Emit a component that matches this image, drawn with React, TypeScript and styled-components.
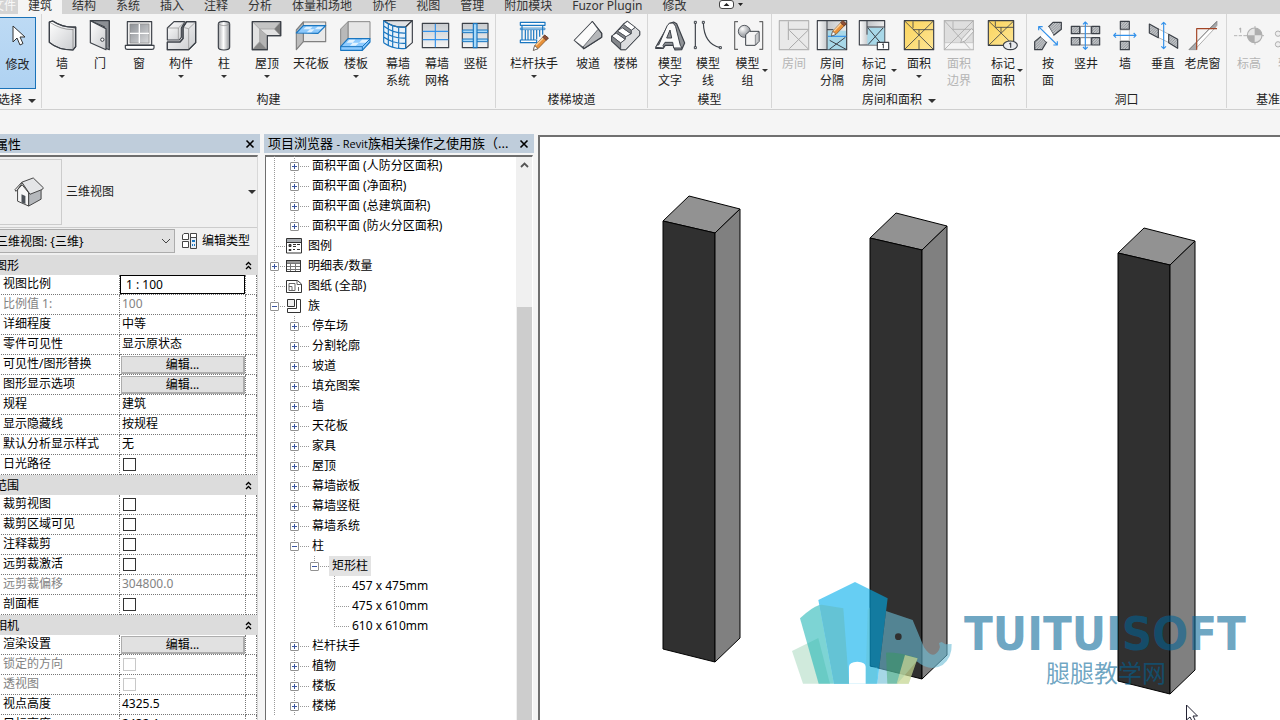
import React from 'react';
import styled, { createGlobalStyle, css } from 'styled-components';

const Global = createGlobalStyle`
  * { box-sizing: border-box; }
  body {
    margin: 0;
    background: #f5f5f5;
    color: #000;
    font-family: "Noto Sans", "Noto Sans CJK SC", sans-serif;
    font-size: 12px;
    line-height: 17px;
    overflow: hidden;
  }
  button, input, select { font: inherit; color: inherit; margin: 0; }
`;

const Shell = styled.div`
  display: flex;
  flex-direction: column;
  height: 100vh;
  margin-left: -8px;
  overflow: hidden;
`;

/* ---------- ribbon ---------- */

const TabBar = styled.nav`
  display: flex;
  flex: none;
  height: 14px;
  background: #d4d4d4;
  overflow: hidden;
`;

const Tab = styled.button<{ $active?: boolean; $file?: boolean }>`
  flex: none;
  height: 26px;
  margin-top: -8px;
  padding: ${p => (p.$file ? '0 2px 0 0' : '0 10px')};
  border: 0;
  background: ${p => (p.$active ? '#f5f5f5' : 'transparent')};
  color: ${p => (p.$file ? '#f8f8f8' : '#333')};
  white-space: nowrap;
`;

const TabTools = styled.button`
  display: flex;
  align-items: center;
  height: 10px;
  margin-left: 22px;
  padding: 0;
  border: 0;
  background: none;
`;

const Ribbon = styled.div`
  display: flex;
  flex: none;
  height: 96px;
  padding-left: 8px;
  border-bottom: 1px solid #cfcfcf;
  background: #f5f5f5;
  overflow: hidden;
`;

const PanelBox = styled.section`
  display: flex;
  flex: none;
  flex-direction: column;
  height: 94px;
  border-right: 1px solid #d6d6d6;
`;

const PanelButtons = styled.div`
  display: flex;
  flex: 1;
`;

const PanelTitle = styled.div`
  display: flex;
  align-items: center;
  justify-content: center;
  gap: 6px;
  height: 17px;
  margin-top: auto;
  color: #222;
  white-space: nowrap;
`;

const ToolButton = styled.button<{ $w: number; $off?: boolean }>`
  position: relative;
  display: flex;
  flex: none;
  flex-direction: column;
  align-items: center;
  width: ${p => p.$w}px;
  padding: 5px 0 0;
  border: 0;
  background: none;
  color: ${p => (p.$off ? '#b4b4b4' : '#222')};
  white-space: nowrap;
  svg { display: block; flex: none; }
`;

const ToolLabel = styled.span`
  margin-top: 4px;
  text-align: center;
  white-space: pre-line;
`;

const Caret = styled.i<{ $size?: number; $side?: boolean }>`
  display: block;
  border: ${p => p.$size ?? 3}px solid transparent;
  border-top-color: #333;
  border-bottom: 0;
  ${p => p.$side
    ? css`position: absolute; right: 3px; bottom: 19px;`
    : css`margin-top: 3px;`}
`;

const ModifyButton = styled(ToolButton)`
  height: 72px;
  margin: 3px 5px 0 -1px;
  padding-top: 2px;
  border: 1px solid #1a72b8;
  background: linear-gradient(#bddaf4, #afd2f2);
`;

const SelectTitle = styled(PanelTitle)`
  justify-content: flex-end;
  margin-left: -2px;
  padding-right: 5px;
`;

const D = '#3c4148';
const B = '#1976c0';
const S = '#3391ea';

function Icon({ x, children }: { x: number; children: React.ReactNode }) {
  return (
    <svg width="32" height="32" viewBox={`${x} 57 96 96`} fill="none" stroke={D} strokeWidth="3.5" strokeLinejoin="round" aria-hidden="true">
      {children}
    </svg>
  );
}

const Pencil = ({ x, y }: { x: number; y: number }) => (
  <g transform={`translate(${x} ${y})`} strokeWidth="2">
    <path d="M0 48L4 34L34 2L45 11L14 43Z" fill="#e8913a" stroke="#6b4524" />
    <path d="M8 33L36 4" stroke="#fbd09a" strokeWidth="4" />
    <path d="M34 2L45 11L39 18L28 9Z" fill="#8f4f38" stroke="#553326" />
    <path d="M0 48L4 34L14 43Z" fill="#fff" stroke="#555" />
  </g>
);

const Hatch = ({ d }: { d: string }) => (
  <>
    <path d={d} fill="#c3c6c9" stroke="none" />
    <path d={d} fill="url(#hatch)" stroke={D} strokeWidth="3.5" />
  </>
);

const icons: Record<string, React.ReactNode> = {
  wall: <Icon x={138}><path d="M148 66L158 63Q190 84 227 81V140L219 150Q175 150 148 127Z" fill="url(#metal)" /><path d="M148 66Q182 89 219 89V150M219 89L227 81" stroke="#777" strokeWidth="2" /><path d="M148 66L158 63Q190 84 227 81V140L219 150Q175 150 148 127Z" /></Icon>,
  door: <Icon x={252}><path d="M271 62H328V149L313 143V80Z" fill="#8b8f94" /><path d="M271 62L318 86V149L271 128Z" fill="url(#metal)" /><path d="M328 62V140" /><circle cx="307" cy="119" r="5" fill="#fff" strokeWidth="3" /></Icon>,
  window: <Icon x={369}><path d="M382 65H455V135H382Z" fill="#eee" /><path d="M390 72H447V129H390Z" fill="url(#gray)" stroke="#888" strokeWidth="2" /><path d="M418 72V129M390 100H447" stroke="#fff" strokeWidth="4" /><path d="M376 136H462V144Q462 148 456 148H382Q376 148 376 144Z" fill="#fff" /></Icon>,
  component: <Icon x={495}><path d="M502 84L522 65H555L544 84V112L538 120H502Z" fill="url(#metal)" /><path d="M502 84H535V120M535 84L555 65" stroke="#888" strokeWidth="2" /><path d="M560 65H587V128L566 149H502V126H540L549 116V82Z" fill="url(#metal)" /><path d="M549 82L566 86L587 66M566 86V149" stroke="#888" strokeWidth="2" /><path d="M560 65H587V128L566 149H502V126H540L549 116V82Z" /></Icon>,
  column: <Icon x={624}><path d="M655 72Q655 64 672 64Q689 64 689 72V142Q689 150 672 150Q655 150 655 142Z" fill="url(#tube)" /><path d="M655 72Q672 82 689 72" stroke="#888" strokeWidth="2" /></Icon>,
  roof: <Icon x={753}><path d="M757 65H842V107H802V149H757Z" fill="#e2e2e2" /><path d="M757 65H842L823 87H779Z" fill="#c4c4c4" stroke="none" /><path d="M842 65V107L823 87Z" fill="#777" stroke="none" /><path d="M757 149L779 125L802 149Z" fill="#888" stroke="none" /><path d="M779 87L802 107V149L779 125Z" fill="#b4b4b4" stroke="none" /><path d="M757 65L779 87H823L842 65M823 87L842 107M779 87V125L757 149M779 125L802 149M779 87L802 107" stroke="#999" strokeWidth="2" /><path d="M757 65H842V107H802V149H757Z" /></Icon>,
  ceiling: <Icon x={885}><path d="M910 66H977V125H910Z" fill="#e9e9e9" stroke="#808080" /><path d="M889 90L910 66V125L889 149Z" fill="#bcbcbc" stroke="#808080" /><path d="M889 99L910 77H977L954 100Z" fill="#8cc8fb" stroke={B} /><path d="M918 80H938L930 88H910ZM953 80H970L962 88H944ZM930 88H944L934 97H920Z" fill="#ddf0ff" stroke="none" /></Icon>,
  floor: <Icon x={60}><path d="M84 65H150V117H84Z" fill="#e6e6e6" stroke="#888" strokeWidth="3" /><path d="M62 87L84 65V117L62 140Z" fill="#b9b9b9" stroke="#888" strokeWidth="3" /><path d="M62 140L84 116H150V126L127 151H62Z" fill="#8ecbff" stroke={B} /><path d="M88 119H106L98 128H80ZM126 119H146L137 128H117ZM98 128H117L107 137H90Z" fill="#e3f3ff" stroke="none" /><path d="M62 140H127L150 117M127 140V151" stroke={B} strokeWidth="3" /></Icon>,
  curtain: <Icon x={186}><path d="M191 128V62Q220 84 257 81V145Q215 149 191 128Z" fill="#e8f2fa" stroke="none" /><path d="M191 62H277L257 81Q220 84 191 62Z" fill="#dfe1e4" /><path d="M257 81L277 62V128L257 145Z" fill="#f5f5f5" /><path d="M191 62Q220 84 257 81M191 78Q220 101 257 99M191 95Q220 116 257 114M191 111Q220 132 257 130M191 128Q220 149 257 145M205 71V137M218 77V142M236 81V146M257 81V146M191 62V128" stroke={B} /></Icon>,
  grid: <Icon x={303}><path d="M307 70H386V143H307Z" fill="url(#gray2)" /><path d="M346 71V142M308 94H385M308 119H385" stroke={S} /></Icon>,
  mullion: <Icon x={417}><path d="M424 70H501V143H424Z" fill="url(#gray2)" /><path d="M425 90H500V98H425ZM425 117H500V125H425Z" fill="#a9dafa" stroke={B} strokeWidth="3" /><path d="M457 71H468V143H457Z" fill="#a9dafa" stroke={B} /></Icon>,
  railing: <Icon x={594}><path d="M601 67H675V76H601ZM601 120H650V128H601Z" fill="#fff" stroke={B} /><path d="M601 84H675V89H601Z" fill="#bfe0f7" stroke={B} strokeWidth="2" /><path d="M606 76V120M616 90V120M624 90V120M633 90V120M641 90V120M650 90V118M659 90V110M668 76V104" stroke={B} strokeWidth="3.5" /><Pencil x={640} y={103} /></Icon>,
  ramp: <Icon x={756}><path d="M763 121L817 65L845 100V112L791 146Z" fill="#fff" /><path d="M817 65L845 100V112L791 146L789 140Z" fill="#b5b7ba" /><path d="M763 121L817 65L834 88L789 141Z" fill="#fbfbfb" strokeWidth="2" /></Icon>,
  stair: <Icon x={870}><path d="M910 73L922 64L959 94V105L917 149H902L875 123V111Z" fill="#bfc1c4" /><path d="M910 73L922 64L946 82L934 91ZM892 93L907 83L933 101L919 111ZM875 108L889 99L916 118L902 129Z" fill="#fff" strokeWidth="2.5" /><path d="M910 73L934 91V102L907 83M892 93L919 111V120L889 99M875 108L902 129V147L875 123Z" fill="#85888c" strokeWidth="2" /><path d="M934 91L946 82L959 94V105L917 149H902V129L916 118V111L934 101Z" fill="#dcdddf" strokeWidth="2.5" /></Icon>,
  modelText: <Icon x={42}><path d="M88 71L101 66L110 71L134 129L125 149L105 150L100 136H76L69 145H47L51 135Z" fill="#8f9296" /><path d="M47 142L51 135H56L82 76Q88 67 97 69Q104 71 107 80L121 136L126 144H101L98 127H75L69 137L72 144ZM80 114H95L90 90Z" fill="#fafafa" fillRule="evenodd" strokeWidth="3" /></Icon>,
  modelLine: <Icon x={156}><path d="M166 68V143M190 68Q192 132 241 143" /><path d="M163 64H169V70H163ZM163 140H169V146H163ZM187 64H193V70H187ZM238 140H244V146H238Z" fill="#fff" strokeWidth="3" /></Icon>,
  modelGroup: <Icon x={273}><path d="M291 65H281V148H291M355 65H365V148H355" stroke="#666" /><circle cx="310" cy="94" r="18" fill="url(#ball)" strokeWidth="2.5" /><path d="M314 104L325 94H354V124L343 136H314Z" fill="#f4f4f4" strokeWidth="3" /><path d="M343 105L354 95V124L343 135Z" fill="#c6c8ca" strokeWidth="1.5" /></Icon>,
  room: <Icon x={414}><path d="M418 62H506V149H418Z" fill="#e9e9e9" stroke="#b5b5b5" /><path d="M445 64V120M445 88H506M448 91L504 146M504 91L448 146" stroke="#a9a9a9" strokeWidth="3" /></Icon>,
  roomSep: <Icon x={528}><path d="M532 62H620V149H532Z" fill="url(#side)" /><path d="M562 92H618V148H562Z" fill="#a8d8e8" stroke="none" /><path d="M561 63V148M561 89H580M569 121L618 148M616 112L568 148" strokeWidth="3" /><path d="M564 109H619" stroke={S} /><Pencil x={574} y={60} /></Icon>,
  tagRoom: <Icon x={654}><path d="M658 62H734V135H658Z" fill="url(#side)" /><path d="M682 83H733V134H682Z" fill="#a8d8e8" stroke="none" /><path d="M681 63V104M681 81H733M684 84L726 134M729 84L684 134" strokeWidth="3" /><path d="M712 127H746V149H712Z" fill="#fff" /><path d="M726 134L730 131V145" strokeWidth="3" /></Icon>,
  area: <Icon x={789}><path d="M793 62H881V149H793Z" fill="url(#gold)" /><path d="M793 62L881 149M881 62L793 149M819 64V85M819 89H881M837 89V105M837 120V148" strokeWidth="2.5" /></Icon>,
  areaEdge: <Icon x={909}><path d="M913 62H1000V149H913Z" fill="#dedede" stroke="#b5b5b5" /><path d="M914 128H1000V148H914Z" fill="#f4f4f4" stroke="#bbb" strokeWidth="2" /><path d="M913 62L990 146M1000 62L913 149M939 64V88H1000" stroke="#a9a9a9" strokeWidth="2.5" /><path d="M962 128L966 116L994 86L1002 93L975 123Z" fill="#eee" stroke="#a5a5a5" strokeWidth="2.5" /></Icon>,
  tagArea: <Icon x={105}><path d="M109 62H185V136H109Z" fill="url(#gold)" /><path d="M110 63L185 136M185 63L110 136M130 64V80M130 82H185M147 82V98" strokeWidth="2.5" /><ellipse cx="175" cy="136" rx="21" ry="13" fill="#e9ebee" /><path d="M172 132L176 129V143" strokeWidth="3.5" /></Icon>,
  byFace: <Icon x={246}><Hatch d="M296 80L309 67H334V88L311 106Z" /><Hatch d="M254 125L272 110L290 126L276 149H254Z" /><path d="M272 110L296 80L311 106L290 126Z" fill="#fff" stroke="none" /><path d="M266 80L322 135M266 91V80H278M322 124V135H310" stroke={S} /></Icon>,
  shaft: <Icon x={360}><Hatch d="M364 79H389V101H364ZM425 79H449V101H425ZM364 113H389V135H364ZM425 113H449V135H425Z" /><path d="M391 79H423V101H391ZM391 113H423V135H391Z" fill="#fff" strokeWidth="2" /><path d="M406 66V148M399 73L406 66L413 73M399 141L406 148L413 141" stroke={S} /></Icon>,
  wallOpen: <Icon x={477}><Hatch d="M511 64H538V88H511ZM511 124H538V149H511Z" /><path d="M511 90H538V122H511Z" fill="#fff" stroke="#aaa" strokeWidth="2" /><path d="M491 106H558M498 99L491 106L498 113M551 99L558 106L551 113" stroke={S} /></Icon>,
  vertical: <Icon x={591}><path d="M624 86L657 103V128L624 112Z" fill="#fff" stroke="#999" strokeWidth="2" /><Hatch d="M598 72L625 87V113L598 99Z" /><Hatch d="M656 103L683 118V145L656 128Z" /><path d="M641 67V146M634 74L641 67L648 74M634 139L641 146L648 139" stroke={S} /></Icon>,
  dormer: <Icon x={711}><path d="M717 149L740 126L740 149ZM778 86L801 64V76L793 86Z" fill="#a7a9ac" stroke="#8b8d90" strokeWidth="2" /><path d="M740 126L778 86H793L740 143Z" fill="#fff" stroke="#888" strokeWidth="2" /><path d="M717 149L801 64" stroke="#666" strokeWidth="2" /><path d="M801 86H740V149" stroke="#a34525" /></Icon>,
  level: <Icon x={849}><path d="M852 107H862M866 107H876M880 107H942M915 78V134" stroke="#b5b5b5" strokeWidth="3" /><circle cx="914" cy="106" r="22" fill="#e6e6e6" stroke="#b0b0b0" /><path d="M914 84A22 22 0 0 1 936 106H914ZM914 128A22 22 0 0 1 892 106H914Z" fill="#aeaeae" stroke="none" /><path d="M867 88L872 84V98" stroke="#aaa" strokeWidth="3" /></Icon>,
  axis: <Icon x={972}><g stroke="#b0b0b0" strokeWidth="3"><circle cx="984" cy="101" r="8" fill="#eee" /><circle cx="984" cy="133" r="8" fill="#eee" /><path d="M994 101H1060M994 133H1060" /></g></Icon>,
};

interface Tool { icon: string; label: string; w: number; caret?: 'below' | 'side'; off?: boolean }

const groups: { title: string; more?: boolean; tools: Tool[] }[] = [
  {
    title: '构建',
    tools: [
      { icon: 'wall', label: '墙', w: 40, caret: 'below' },
      { icon: 'door', label: '门', w: 36 },
      { icon: 'window', label: '窗', w: 42 },
      { icon: 'component', label: '构件', w: 42, caret: 'below' },
      { icon: 'column', label: '柱', w: 44, caret: 'below' },
      { icon: 'roof', label: '屋顶', w: 42, caret: 'below' },
      { icon: 'ceiling', label: '天花板', w: 46 },
      { icon: 'floor', label: '楼板', w: 44, caret: 'below' },
      { icon: 'curtain', label: '幕墙\n系统', w: 40 },
      { icon: 'grid', label: '幕墙\n网格', w: 38 },
      { icon: 'mullion', label: '竖梃', w: 39 },
    ],
  },
  {
    title: '楼梯坡道',
    tools: [
      { icon: 'railing', label: '栏杆扶手', w: 76, caret: 'below' },
      { icon: 'ramp', label: '坡道', w: 32 },
      { icon: 'stair', label: '楼梯', w: 43 },
    ],
  },
  {
    title: '模型',
    tools: [
      { icon: 'modelText', label: '模型\n文字', w: 44 },
      { icon: 'modelLine', label: '模型\n线', w: 32 },
      { icon: 'modelGroup', label: '模型\n组', w: 47, caret: 'side' },
    ],
  },
  {
    title: '房间和面积',
    more: true,
    tools: [
      { icon: 'room', label: '房间', w: 44, off: true },
      { icon: 'roomSep', label: '房间\n分隔', w: 32 },
      { icon: 'tagRoom', label: '标记\n房间', w: 52, caret: 'side' },
      { icon: 'area', label: '面积', w: 38, caret: 'below' },
      { icon: 'areaEdge', label: '面积\n边界', w: 42, off: true },
      { icon: 'tagArea', label: '标记\n面积', w: 46, caret: 'side' },
    ],
  },
  {
    title: '洞口',
    tools: [
      { icon: 'byFace', label: '按\n面', w: 42 },
      { icon: 'shaft', label: '竖井', w: 34 },
      { icon: 'wallOpen', label: '墙', w: 44 },
      { icon: 'vertical', label: '垂直', w: 32 },
      { icon: 'dormer', label: '老虎窗', w: 47 },
    ],
  },
  {
    title: '基准',
    tools: [
      { icon: 'level', label: '标高', w: 44, off: true },
      { icon: 'axis', label: '轴网', w: 38, off: true },
    ],
  },
];

const tabs = ['文件', '建筑', '结构', '系统', '插入', '注释', '分析', '体量和场地', '协作', '视图', '管理', '附加模块', 'Fuzor Plugin', '修改'];

const Gradients = () => (
  <defs>
    <linearGradient id="metal" x1="0" y1="0" x2="1" y2="1"><stop offset="0" stopColor="#fff" /><stop offset="1" stopColor="#c9cbce" /></linearGradient>
    <linearGradient id="gray" x1="0" y1="0" x2="1" y2="1"><stop offset="0" stopColor="#8d9196" /><stop offset="1" stopColor="#d9dadc" /></linearGradient>
    <linearGradient id="gray2" x1="0" y1="0" x2="0" y2="1"><stop offset="0" stopColor="#c9ccd0" /><stop offset="1" stopColor="#f4f4f4" /></linearGradient>
    <linearGradient id="tube"><stop offset="0" stopColor="#a9abae" /><stop offset=".45" stopColor="#fff" /><stop offset="1" stopColor="#8f9296" /></linearGradient>
    <linearGradient id="side"><stop offset="0" stopColor="#fff" /><stop offset=".35" stopColor="#c4c7ca" /><stop offset="1" stopColor="#ececec" /></linearGradient>
    <linearGradient id="gold" x1="0" y1="0" x2="1" y2="1"><stop offset="0" stopColor="#fbd45c" /><stop offset="1" stopColor="#fde594" /></linearGradient>
    <radialGradient id="ball" cx=".35" cy=".3"><stop offset="0" stopColor="#fff" /><stop offset="1" stopColor="#a9acb0" /></radialGradient>
    <pattern id="hatch" width="8" height="8" patternUnits="userSpaceOnUse"><path d="M-2 10L10 -2M-2 2L2 -2M6 10L10 6" stroke="#74787d" strokeWidth="2" /></pattern>
  </defs>
);

/* ---------- docked panels ---------- */

const Main = styled.main`
  display: flex;
  flex: 1;
  min-height: 0;
  padding-top: 24px;
`;

const Dock = styled.section<{ $w: number }>`
  display: flex;
  flex: none;
  flex-direction: column;
  width: ${p => p.$w}px;
  min-height: 0;
`;

const DockHeader = styled.header`
  display: flex;
  flex: none;
  align-items: center;
  justify-content: space-between;
  height: 19px;
  padding: 0 5px 0 4px;
  background: #bfcddb;
  white-space: nowrap;
`;

const PropsHeader = styled(DockHeader)`
  width: 268px;
  padding-left: 3px;
`;

const DockTitle = styled.h2`
  margin: 0;
  font-size: 13px;
  font-weight: 400;
  line-height: 18px;
`;

const LatinTitle = styled.span`
  font-family: "Open Sans", sans-serif;
  font-size: 11px;
`;

const CloseButton = styled.button`
  padding: 0;
  border: 0;
  background: none;
  svg { display: block; }
`;

const PropsBody = styled.div`
  flex: 1;
  width: 266px;
  margin-top: 2px;
  border-top: 2px solid #6e6e6e;
  border-right: 1px solid #d8d8d8;
  background: #f0f0f0;
  overflow: hidden;
`;

const TypeBox = styled.button`
  display: flex;
  align-items: center;
  gap: 4px;
  width: 100%;
  height: 71px;
  padding: 2px 1px 3px 0;
  border: 0;
  border-bottom: 1px solid #ccc;
  background: #f0f0f0;
  color: #222;
  ${Caret} { margin: 0 0 0 auto; }
`;

const Thumb = styled.span`
  display: flex;
  align-items: center;
  justify-content: center;
  width: 70px;
  height: 66px;
  padding-left: 4px;
  border: 1px solid #ccc;
`;

const SelectorRow = styled.div`
  display: flex;
  height: 27px;
  padding-top: 1px;
`;

const ViewSelectBox = styled.div`
  display: grid;
  width: 183px;
  height: 24px;
  svg { grid-area: 1 / 1; align-self: center; justify-self: end; margin-right: 4px; pointer-events: none; }
`;

const ViewSelect = styled.select`
  grid-area: 1 / 1;
  width: 183px;
  height: 24px;
  padding: 0 20px 0 3px;
  border: 1px solid #acacac;
  border-radius: 0;
  background: #e1e1e1;
  appearance: none;
`;

const EditType = styled.button`
  display: flex;
  align-items: center;
  gap: 4px;
  height: 22px;
  margin-left: 6px;
  padding: 0;
  border: 0;
  background: none;
`;

const PropTable = styled.table`
  width: 100%;
  border-collapse: separate;
  border-spacing: 0;
  table-layout: fixed;
  background: #fff;
`;

const SectionHead = styled.th`
  height: 20px;
  padding: 0 3px;
  background: #dcdcdc;
  font-weight: 400;
  text-align: left;
`;

const SectionLine = styled.div`
  display: flex;
  align-items: center;
  justify-content: space-between;
`;

const PropCell = styled.td<{ $muted?: boolean; $first?: boolean; $flush?: boolean }>`
  height: 20px;
  padding: ${p => (p.$first ? '0 0 0 11px' : p.$flush ? '0' : '0 0 0 2px')};
  border-right: 1px dotted #777;
  border-bottom: 1px dotted #777;
  color: ${p => (p.$muted ? '#838383' : '#000')};
  font-weight: 400;
  text-align: left;
  vertical-align: top;
  line-height: 18px;
  white-space: nowrap;
`;

const ScaleInput = styled.input`
  display: block;
  width: 125px;
  height: 19px;
  padding: 0 5px;
  border: 1px solid #000;
  background: #fff;
`;

const EditButton = styled.button`
  display: block;
  width: 124px;
  height: 18px;
  margin: 1px 0 0 1px;
  padding: 0;
  border: 1px solid #adadad;
  border-width: 1px 2px 2px 1px;
  background: #e1e1e1;
  line-height: 15px;
`;

const Check = styled.input`
  display: block;
  width: 13px;
  height: 13px;
  margin: 3px 0 0 1px;
  border: 1px solid #333;
  background: #fff;
  appearance: none;
  &:disabled { border-color: #c8c8c8; }
`;

type Prop = { name: string; kind?: 'text' | 'input' | 'edit' | 'check'; value?: string; muted?: boolean };

const sections: { title: string; rows: Prop[] }[] = [
  {
    title: '图形',
    rows: [
      { name: '视图比例', kind: 'input', value: '1 : 100' },
      { name: '比例值 1:', value: '100', muted: true },
      { name: '详细程度', value: '中等' },
      { name: '零件可见性', value: '显示原状态' },
      { name: '可见性/图形替换', kind: 'edit' },
      { name: '图形显示选项', kind: 'edit' },
      { name: '规程', value: '建筑' },
      { name: '显示隐藏线', value: '按规程' },
      { name: '默认分析显示样式', value: '无' },
      { name: '日光路径', kind: 'check' },
    ],
  },
  {
    title: '范围',
    rows: [
      { name: '裁剪视图', kind: 'check' },
      { name: '裁剪区域可见', kind: 'check' },
      { name: '注释裁剪', kind: 'check' },
      { name: '远剪裁激活', kind: 'check' },
      { name: '远剪裁偏移', value: '304800.0', muted: true },
      { name: '剖面框', kind: 'check' },
    ],
  },
  {
    title: '相机',
    rows: [
      { name: '渲染设置', kind: 'edit' },
      { name: '锁定的方向', kind: 'check', muted: true },
      { name: '透视图', kind: 'check', muted: true },
      { name: '视点高度', value: '4325.5' },
      { name: '目标高度', value: '2432.1' },
    ],
  },
];

function PropRow({ row }: { row: Prop }) {
  const id = `prop-${row.name}`;
  const { kind = 'text' } = row;
  return (
    <tr>
      <PropCell as="th" scope="row" $first $muted={row.muted}>
        {kind === 'input' || kind === 'check' ? <label htmlFor={id}>{row.name}</label> : row.name}
      </PropCell>
      <PropCell $muted={row.muted} $flush={kind === 'input' || kind === 'edit'}>
        {kind === 'text' && row.value}
        {kind === 'input' && <ScaleInput id={id} defaultValue={row.value} />}
        {kind === 'edit' && <EditButton aria-label={`编辑... ${row.name}`}>编辑...</EditButton>}
        {kind === 'check' && <Check id={id} type="checkbox" disabled={row.muted} />}
      </PropCell>
      <PropCell />
    </tr>
  );
}

const CloseX = () => (
  <svg width="10" height="10" viewBox="0 0 10 10" stroke="#000" strokeWidth="1.6"><path d="M1.500 1.500L8.500 8.500M8.500 1.500L1.500 8.500" /></svg>
);

/* ---------- project browser ---------- */

const BrowserBody = styled.div`
  display: flex;
  flex: 1;
  width: 268px;
  min-height: 0;
  margin: 2px 0 0 1px;
  border-top: 2px solid #6e6e6e;
  border-left: 1px solid #6e6e6e;
  border-right: 1px solid #fff;
  background: #fff;
`;

const TreeList = styled.ul`
  flex: 1;
  margin: -1px 0 0;
  padding: 0;
  list-style: none;
  overflow: hidden;
`;

const TreeRow = styled.li`
  display: flex;
  align-items: center;
  height: 20px;
  white-space: nowrap;
`;

const vDots = 'repeating-linear-gradient(#999 0 1px, transparent 1px 2px)';
const hDots = 'repeating-linear-gradient(90deg, #999 0 1px, transparent 1px 2px)';

const Guide = styled.span<{ $line: 'full' | 'half' | 'none'; $branch?: boolean }>`
  flex: none;
  display: flex;
  align-items: center;
  width: 20px;
  height: 20px;
  padding-left: 4px;
  background:
    ${vDots} 8px 0 / 1px ${p => ({ full: 20, half: 10, none: 0 })[p.$line]}px no-repeat,
    ${hDots} 8px 10px / ${p => (p.$branch ? 12 : 0)}px 1px no-repeat;
`;

const Stub = styled.span`
  flex: none;
  width: 3px;
  height: 20px;
  background: ${hDots} 0 10px / 3px 1px no-repeat;
`;

const Expander = styled.button`
  display: flex;
  width: 9px;
  height: 9px;
  padding: 0;
  border: 1px solid #919191;
  border-radius: 1px;
  background: #fff;
`;

const TreeLabel = styled.span<{ $selected?: boolean }>`
  padding: 1px 3px 2px;
  background: ${p => (p.$selected ? '#e3e3e3' : 'transparent')};
`;

const ScrollTrack = styled.div`
  display: flex;
  flex: none;
  flex-direction: column;
  align-items: center;
  width: 16px;
  background: #f0f0f0;
`;

const ScrollUp = styled.button`
  display: flex;
  width: 16px;
  height: 150px;
  padding: 5px 0 0 4px;
  border: 0;
  background: none;
`;

const ScrollThumb = styled.div`
  flex: 1;
  width: 15px;
  background: #cdcdcd;
`;

type Node = { text: string; level: number; mark?: '+' | '-'; lines: string; icon?: string; selected?: boolean };

/* One letter per guide column: f = full line, h = half line, n = none. */
const nodes: Node[] = [
  ...['面积平面 (人防分区面积)', '面积平面 (净面积)', '面积平面 (总建筑面积)'].map(text => ({ text, level: 2, mark: '+' as const, lines: 'ff' })),
  { text: '面积平面 (防火分区面积)', level: 2, mark: '+', lines: 'fh' },
  { text: '图例', level: 1, lines: 'f', icon: 'legend' },
  { text: '明细表/数量', level: 1, mark: '+', lines: 'f', icon: 'schedule' },
  { text: '图纸 (全部)', level: 1, lines: 'f', icon: 'sheet' },
  { text: '族', level: 1, mark: '-', lines: 'f', icon: 'family' },
  ...['停车场', '分割轮廓', '坡道', '填充图案', '墙', '天花板', '家具', '屋顶', '幕墙嵌板', '幕墙竖梃', '幕墙系统'].map(text => ({ text, level: 2, mark: '+' as const, lines: 'ff' })),
  { text: '柱', level: 2, mark: '-', lines: 'ff' },
  { text: '矩形柱', level: 3, mark: '-', lines: 'ffh', selected: true },
  { text: '457 x 475mm', level: 4, lines: 'ffnf' },
  { text: '475 x 610mm', level: 4, lines: 'ffnf' },
  { text: '610 x 610mm', level: 4, lines: 'ffnh' },
  ...['栏杆扶手', '植物', '楼板', '楼梯'].map(text => ({ text, level: 2, mark: '+' as const, lines: 'ff' })),
];

const treeIcons: Record<string, React.ReactNode> = {
  legend: <><path d="M.5 .5H15.500V15H.5Z" fill="#fff" /><path d="M1 1H15V4H1Z" fill="#a9adb2" stroke="none" /><path d="M.5 4.500H15.500M7 6.500H10M11 6.500H14M7 8.500H10M7 11.500H9M11 11.500H14" /><path d="M3 6.500H5V8.500H3ZM3 11.500H5V12.500H3Z" fill="#555" /></>,
  schedule: <><path d="M.5 2.500H14.500V13.500H.5Z" fill="#fff" /><path d="M1 3H14V5.500H1Z" fill="#999" stroke="none" /><path d="M.5 5.500H14.500M.5 8.500H14.500M.5 11.500H14.500M4.500 5.500V13.500M9.500 5.500V13.500" stroke="#777" /><path d="M.5 2.500H14.500V13.500H.5Z" /></>,
  sheet: <><path d="M.5 2.500H11.500L15.500 6V14.500H.5Z" fill="#fff" /><path d="M11 2.500V6.500H15.500M3 5.500H9V12.500H3ZM3 8.500H6V12M12.500 9V13" stroke="#666" /></>,
  family: <><path d="M1.500 1.500H8.500V8.500H1.500Z" fill="#eee" /><path d="M10.500 1.500H14.500V14.500H1.500V10.500H10.500Z" fill="#fff" /></>,
};

const TreeIcon = styled.svg`
  flex: none;
  margin-right: 3px;
`;

const lineKind = { f: 'full', h: 'half', n: 'none' } as const;

/* ---------- 3D view ---------- */

const Viewport = styled.section`
  flex: 1;
  min-width: 0;
  margin: 1px 0 0 4px;
  border: solid #707070;
  border-width: 2px 0 0 2px;
  background: #fff;
  overflow: hidden;
  svg { display: block; }
`;

function Pillar({ x, y }: { x: number; y: number }) {
  return (
    <g transform={`translate(${x} ${y})`} stroke="#000" strokeLinejoin="round">
      <path d="M0 0L26 -25L77 -12L52 12Z" fill="#929292" />
      <path d="M0 0L52 12V441L0 428Z" fill="#303030" />
      <path d="M52 12L77 -12V417L52 441Z" fill="#808080" />
    </g>
  );
}

const Elephant = () => (
  <g transform="translate(240 433) scale(.3333)">
    <path d="M36 243L115 204L150 341H69Z" fill="#57b582" fillOpacity=".28" />
    <path d="M60 145Q95 112 118 105L162 341H116Z" fill="#1fb5b5" fillOpacity=".58" />
    <path d="M318 123L398 150L432 232Q458 272 477 240Q482 230 477 219L485 216L496 223L515 222Q517 262 488 285Q450 308 410 274L352 341H292L318 125Z" fill="#6bbcd6" fillOpacity=".6" />
    <path d="M115 90L225 36L323 85L318 125L292 341H162Z" fill="#00aeeb" fillOpacity=".6" />
    <path d="M118 105L125 104L190 115L207 341H162Z" fill="#64c3d5" />
    <path d="M263 120L270 112V292H292L290 341H257Z" fill="#64c3d5" fillOpacity=".5" />
    <path d="M318 248Q350 246 413 264L386 341H322Z" fill="#339d53" fillOpacity=".4" />
    <path d="M375 255L413 265L386 341H350Z" fill="#f5eaa6" fillOpacity=".55" />
    <path d="M207 341V290Q207 277 232 275Q257 277 257 290V341Z" fill="#fff" />
    <circle cx="355" cy="200" r="10" fill="#303030" />
  </g>
);

export default function App() {
  return (
    <>
      <Global />
      <Shell>
        <TabBar>
          {tabs.map((t, i) => <Tab key={t} $file={i === 0} $active={i === 1}>{t}</Tab>)}
          <TabTools aria-label="最小化功能区">
            <svg width="24" height="10" viewBox="0 0 24 10">
              <rect x=".5" y=".5" width="14" height="8" rx="2.500" fill="#fff" stroke="#444" />
              <path d="M4.500 6L7.500 3L10.500 6ZM19 3H24L21.500 6Z" fill="#222" />
            </svg>
          </TabTools>
        </TabBar>
        <Ribbon>
          <PanelBox>
            <ModifyButton $w={37}>
              <svg width="32" height="32" viewBox="0 0 32 32"><path d="M11 6V22L15 18L18 25L21 23.500L18 17H23Z" fill="#fff" stroke="#333" strokeLinejoin="round" /></svg>
              <ToolLabel>修改</ToolLabel>
            </ModifyButton>
            <SelectTitle>选择<Caret $size={4} /></SelectTitle>
          </PanelBox>
          {groups.map(g => (
            <PanelBox key={g.title}>
              <PanelButtons>
                {g.tools.map(t => (
                  <ToolButton key={t.icon} $w={t.w} $off={t.off} disabled={t.off}>
                    {icons[t.icon]}
                    <ToolLabel>{t.label}</ToolLabel>
                    {t.caret && <Caret $side={t.caret === 'side'} />}
                  </ToolButton>
                ))}
              </PanelButtons>
              <PanelTitle>{g.title}{g.more && <Caret $size={4} />}</PanelTitle>
            </PanelBox>
          ))}
        </Ribbon>
        <Main>
          <Dock $w={272}>
            <PropsHeader>
              <DockTitle>属性</DockTitle>
              <CloseButton aria-label="关闭属性"><CloseX /></CloseButton>
            </PropsHeader>
            <PropsBody>
              <TypeBox>
                <Thumb>
                  <svg width="32" height="32" viewBox="36 136 98 98" strokeLinejoin="round" strokeWidth="3">
                    <path d="M50 178L64 157L84 183V228L50 213Z" fill="#f6f6f6" stroke="#444" />
                    <path d="M84 183L122 170V207L84 228Z" fill="#b5b8bc" stroke="#444" />
                    <path d="M62 192L74 197V222L62 217Z" fill="#4d5258" />
                    <path d="M63 155L98 142L129 172L126 177L88 192Z" fill="#e4e5e7" stroke="#444" />
                    <path d="M63 155L42 178L45 183L64 163L86 190" fill="none" stroke="#444" />
                  </svg>
                </Thumb>
                三维视图
                <Caret $size={4} />
              </TypeBox>
              <SelectorRow>
                <ViewSelectBox>
                  <ViewSelect aria-label="视图"><option>三维视图: {'{三维}'}</option></ViewSelect>
                  <svg width="10" height="6" viewBox="0 0 10 6" fill="none" stroke="#444"><path d="M1 1L5 5L9 1" /></svg>
                </ViewSelectBox>
                <EditType>
                  <svg width="17" height="17" viewBox="0 0 17 17" fill="#fff" stroke="#444">
                    <path d="M1.500 3L3 1.500H7.500V7.500H1.500ZM9.500 1.500H15.500V6.500H9.500ZM1.500 9.500H7.500V15.500H1.500Z" />
                    <path d="M9.500 5.500H15.500V16.500H9.500Z" fill="#e8eef5" />
                    <path d="M11 8H14V10H11ZM11 12H12V14H11ZM13 12H14V14H13Z" fill={B} stroke="none" />
                  </svg>
                  编辑类型
                </EditType>
              </SelectorRow>
              <PropTable>
                <colgroup><col width="128" /><col width="126" /><col /></colgroup>
                {sections.map(s => (
                  <tbody key={s.title}>
                    <tr>
                      <SectionHead colSpan={3}>
                        <SectionLine>
                          {s.title}
                          <svg width="11" height="9" viewBox="0 0 11 9" fill="none" stroke="#000" strokeWidth="1.300"><path d="M3 4L5.500 1.500L8 4M3 8L5.500 5.500L8 8" /></svg>
                        </SectionLine>
                      </SectionHead>
                    </tr>
                    {s.rows.map(r => <PropRow key={r.name} row={r} />)}
                  </tbody>
                ))}
              </PropTable>
            </PropsBody>
          </Dock>
          <Dock $w={270}>
            <DockHeader>
              <DockTitle>项目浏览器 <LatinTitle>- Revit</LatinTitle>族相关操作之使用族（...</DockTitle>
              <CloseButton aria-label="关闭项目浏览器"><CloseX /></CloseButton>
            </DockHeader>
            <BrowserBody>
              <TreeList>
                {nodes.map(n => (
                  <TreeRow key={n.text + n.level}>
                    {[...n.lines].map((l, i) => {
                      const last = i === n.lines.length - 1;
                      return (
                        <Guide key={i} $line={lineKind[l as 'f' | 'h' | 'n']} $branch={last}>
                          {last && n.mark && (
                            <Expander aria-label={n.mark === '+' ? '展开' : '折叠'}>
                              <svg width="7" height="7" viewBox="0 0 7 7" stroke="#3a55a0"><path d={n.mark === '+' ? 'M1 3.5H6M3.5 1V6' : 'M1 3.5H6'} /></svg>
                            </Expander>
                          )}
                        </Guide>
                      );
                    })}
                    {n.icon
                      ? <TreeIcon width="16" height="16" viewBox="0 0 16 16" stroke="#333" fill="none">{treeIcons[n.icon]}</TreeIcon>
                      : <Stub />}
                    <TreeLabel $selected={n.selected}>{n.text}</TreeLabel>
                  </TreeRow>
                ))}
              </TreeList>
              <ScrollTrack>
                <ScrollUp aria-label="向上滚动">
                  <svg width="9" height="6" viewBox="0 0 9 6" fill="none" stroke="#555" strokeWidth="1.800"><path d="M1 5L4.500 1.500L8 5" /></svg>
                </ScrollUp>
                <ScrollThumb />
              </ScrollTrack>
            </BrowserBody>
          </Dock>
          <Viewport>
            <svg width="100%" height="100%">
              <Gradients />
              <Pillar x={123} y={84} />
              <Pillar x={330} y={101} />
              <Pillar x={578} y={116} />
              <Elephant />
              <g fill="#006396" fillOpacity=".58">
                <text x="424" y="513" fontFamily="'DejaVu Sans Condensed', 'DejaVu Sans', sans-serif" fontWeight="700" fontSize="47">TUITUISOFT</text>
                <text x="506" y="545" fontFamily="'Noto Sans CJK SC', sans-serif" fontSize="24">腿腿教学网</text>
              </g>
              <path d="M646.500 568V583L650 580L653 586L656 585L653 579H657.500Z" fill="#fff" stroke="#223" />
            </svg>
          </Viewport>
        </Main>
      </Shell>
    </>
  );
}
